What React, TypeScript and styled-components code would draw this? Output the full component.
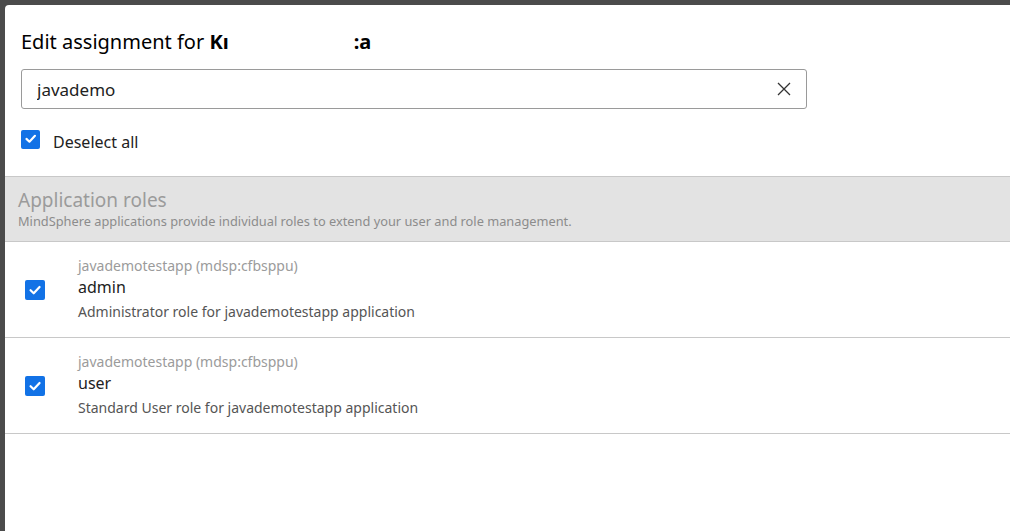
import React from "react";
import styled, { createGlobalStyle } from "styled-components";

const Global = createGlobalStyle`
  html, body { margin: 0; padding: 0; }
  body {
    width: 1010px;
    height: 531px;
    overflow: hidden;
    background: #4b4b4b;
    font-family: "Noto Sans", "Open Sans", sans-serif;
  }
`;

const Backdrop = styled.div`
  width: 1010px;
  height: 531px;
  background: #4b4b4b;
  padding: 5px 0 0 5px;
  box-sizing: border-box;
  display: flex;
`;

const Dialog = styled.div`
  flex: 1;
  background: #ffffff;
  border-top-left-radius: 4px;
  display: flex;
  flex-direction: column;
  overflow: hidden;
`;

const Header = styled.div`
  padding: 24px 0 0 16px;
  display: flex;
  flex-direction: column;
`;

const Title = styled.h1`
  margin: 0;
  font-size: 20px;
  font-weight: 400;
  line-height: 26px;
  color: #000;
  white-space: nowrap;
`;

const Name = styled.b`
  font-weight: 700;
`;

const Hidden = styled.span`
  display: inline-block;
  width: 125px;
`;

const SearchBox = styled.div`
  margin-top: 14px;
  width: 786px;
  height: 40px;
  box-sizing: border-box;
  border: 1px solid #9a9a9a;
  border-radius: 3px;
  display: flex;
  align-items: center;
  padding: 0 14px 0 15px;
`;

const SearchInput = styled.input`
  flex: 1;
  border: none;
  outline: none;
  font-family: inherit;
  font-size: 17px;
  color: #222;
  background: transparent;
  padding: 0;
`;

const ClearButton = styled.button`
  border: none;
  background: none;
  padding: 0;
  width: 16px;
  height: 16px;
  display: flex;
  align-items: center;
  justify-content: center;
  color: #333;
`;

const SelectAllRow = styled.label`
  margin-top: 20px;
  display: flex;
  align-items: center;
  gap: 13px;
  font-size: 16px;
  color: #222;
  height: 20px;
`;

const Box = styled.span<{ $size: number }>`
  width: ${(p) => p.$size}px;
  height: ${(p) => p.$size}px;
  border-radius: 2px;
  background: #1272e6;
  display: inline-flex;
  align-items: center;
  justify-content: center;
  flex: none;
`;

const SelectLabel = styled.span`
  position: relative;
  top: 3px;
`;

const Section = styled.div`
  margin-top: 27px;
  background: #e3e3e3;
  border-top: 1px solid #c8c8c8;
  border-bottom: 1px solid #c8c8c8;
  padding: 11px 0 11px 13px;
  display: flex;
  flex-direction: column;
`;

const SectionTitle = styled.div`
  font-size: 19px;
  line-height: 24px;
  color: #9b9b9b;
`;

const SectionSub = styled.div`
  font-size: 12.8px;
  line-height: 18px;
  color: #8c8c8c;
`;

const Row = styled.div`
  height: 96px;
  box-sizing: border-box;
  border-bottom: 1px solid #c8c8c8;
  display: flex;
  align-items: center;
  padding-left: 20px;
  gap: 33px;
`;

const RowText = styled.div`
  display: flex;
  flex-direction: column;
`;

const AppName = styled.div`
  font-size: 14px;
  line-height: 20px;
  color: #9b9b9b;
`;

const RoleName = styled.div`
  font-size: 16px;
  line-height: 22px;
  color: #222;
`;

const RoleDesc = styled.div`
  margin-top: 2px;
  font-size: 14px;
  line-height: 24px;
  color: #555;
`;

const Check = ({ size }: { size: number }) => (
  <Box $size={size}>
    <svg width={size * 0.7} height={size * 0.7} viewBox="0 0 12 12" fill="none">
      <path d="M2.2 6.2 L4.9 8.8 L9.9 3.4" stroke="#fff" strokeWidth="1.9" strokeLinecap="round" strokeLinejoin="round" />
    </svg>
  </Box>
);

const roles = [
  { app: "javademotestapp (mdsp:cfbsppu)", name: "admin", desc: "Administrator role for javademotestapp application" },
  { app: "javademotestapp (mdsp:cfbsppu)", name: "user", desc: "Standard User role for javademotestapp application" },
];

export default function App() {
  return (
    <>
      <Global />
      <Backdrop>
        <Dialog>
          <Header>
            <Title>
              Edit assignment for <Name>Kı<Hidden />:a</Name>
            </Title>
            <SearchBox>
              <SearchInput defaultValue="javademo" />
              <ClearButton aria-label="clear">
                <svg width="14" height="14" viewBox="0 0 14 14">
                  <path d="M1 1 L13 13 M13 1 L1 13" stroke="#333" strokeWidth="1.3" />
                </svg>
              </ClearButton>
            </SearchBox>
            <SelectAllRow>
              <Check size={19} />
              <SelectLabel>Deselect all</SelectLabel>
            </SelectAllRow>
          </Header>
          <Section>
            <SectionTitle>Application roles</SectionTitle>
            <SectionSub>MindSphere applications provide individual roles to extend your user and role management.</SectionSub>
          </Section>
          {roles.map((r) => (
            <Row key={r.name}>
              <Check size={20} />
              <RowText>
                <AppName>{r.app}</AppName>
                <RoleName>{r.name}</RoleName>
                <RoleDesc>{r.desc}</RoleDesc>
              </RowText>
            </Row>
          ))}
        </Dialog>
      </Backdrop>
    </>
  );
}
